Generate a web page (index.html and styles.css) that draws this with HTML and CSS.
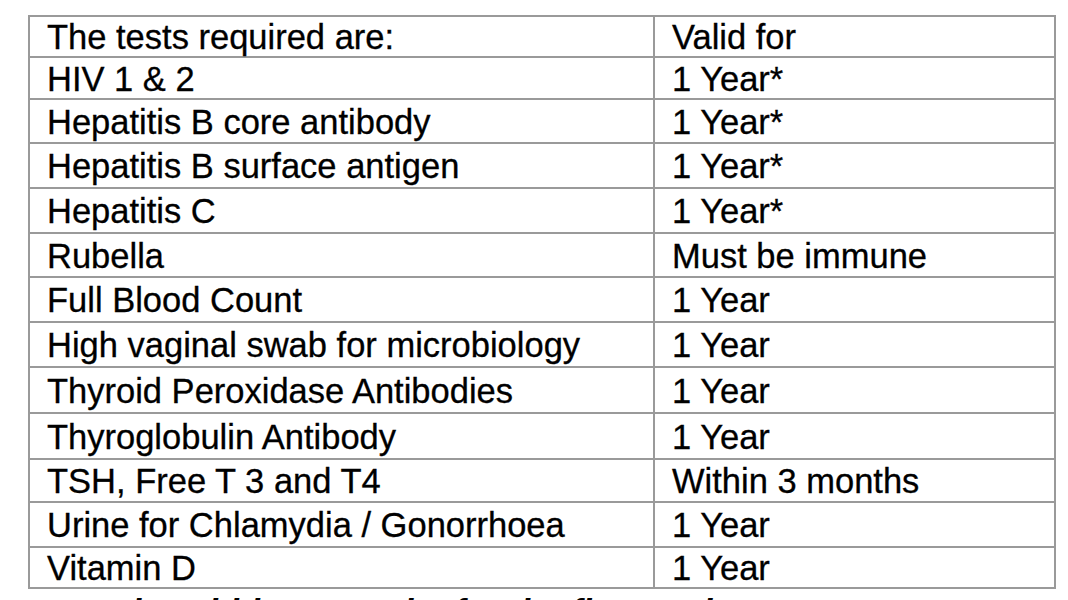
FILE: index.html
```html
<!DOCTYPE html>
<html>
<head>
<meta charset="utf-8">
<link rel="stylesheet" href="styles.css">
</head>
<body>
<div class="page">
<table class="tests">
  <colgroup><col class="col-test"><col class="col-valid"></colgroup>
  <tr class="r1"><td>The tests required are:</td><td>Valid for</td></tr>
  <tr class="r2"><td>HIV 1 &amp; 2</td><td>1 Year*</td></tr>
  <tr class="r3"><td>Hepatitis B core antibody</td><td>1 Year*</td></tr>
  <tr class="r4"><td>Hepatitis B surface antigen</td><td>1 Year*</td></tr>
  <tr class="r5"><td>Hepatitis C</td><td>1 Year*</td></tr>
  <tr class="r6"><td>Rubella</td><td>Must be immune</td></tr>
  <tr class="r7"><td>Full Blood Count</td><td>1 Year</td></tr>
  <tr class="r8"><td>High vaginal swab for microbiology</td><td>1 Year</td></tr>
  <tr class="r9"><td>Thyroid Peroxidase Antibodies</td><td>1 Year</td></tr>
  <tr class="r10"><td>Thyroglobulin Antibody</td><td>1 Year</td></tr>
  <tr class="r11"><td>TSH, Free T 3 and T4</td><td>Within 3 months</td></tr>
  <tr class="r12"><td>Urine for Chlamydia / Gonorrhoea</td><td>1 Year</td></tr>
  <tr class="r13"><td>Vitamin D</td><td>1 Year</td></tr>
</table>
<p class="note">*Must be within 3 months for the first cycle</p>
</div>
</body>
</html>
```

FILE: styles.css
```css
html, body {
  margin: 0;
  padding: 0;
  background: #ffffff;
}
body {
  font-family: "Liberation Sans", Arial, sans-serif;
  color: #000;
  overflow: hidden;
}
.page {
  padding: 15px 0 0 28px;
}
.tests {
  border-collapse: collapse;
  width: 1028px;
  table-layout: fixed;
  font-size: 34.5px;
  line-height: 38px;
  -webkit-text-stroke: 0.3px #000;
}
.col-test {
  width: 625px;
}
.tests td {
  border: 2px solid #9a9a9a;
  padding: 1px 0 0 17px;
  vertical-align: middle;
  white-space: nowrap;
}
.r1 { height: 41px; }
.r2 { height: 42px; }
.r3 { height: 44px; }
.r4 { height: 45px; }
.r5 { height: 45px; }
.r6 { height: 44px; }
.r7 { height: 45px; }
.r8 { height: 45px; }
.r9 { height: 46px; }
.r10 { height: 46px; }
.r11 { height: 43px; }
.r12 { height: 45px; }
.r13 { height: 41px; }
.note {
  margin: 4px 0 0 0;
  font-size: 34.5px;
  line-height: 38px;
  font-style: italic;
  font-weight: bold;
}
```
